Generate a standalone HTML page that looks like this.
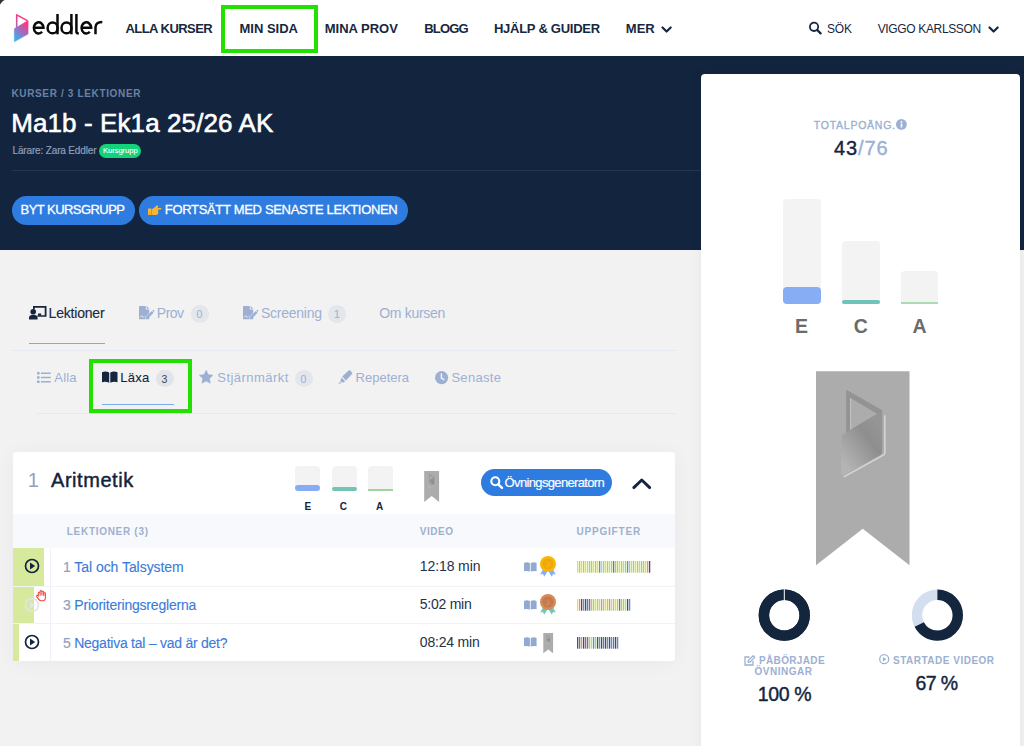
<!DOCTYPE html>
<html><head><meta charset="utf-8"><title>Eddler</title>
<style>
html,body{margin:0;padding:0;width:1024px;height:746px;overflow:hidden;background:#f2f2f2;}
.t{position:absolute;line-height:1;white-space:nowrap;font-family:"Liberation Sans",sans-serif;}
svg{overflow:visible}
</style></head><body>
<div style="position:absolute;left:0px;top:0px;width:1024px;height:56px;background:#fff"></div>
<div style="position:absolute;left:0px;top:56px;width:1024px;height:194px;background:#13253e"></div>
<div style="position:absolute;left:0px;top:250px;width:1024px;height:496px;background:#f2f2f2"></div>
<div style="position:absolute;left:12px;top:170px;width:700px;height:1px;background:#26374f"></div>
<div style="position:absolute;left:701px;top:74px;width:319px;height:700px;background:#fff;border-radius:4px;box-shadow:0 0 14px rgba(0,0,0,0.05)"></div>
<svg style="position:absolute;left:0px;top:0px;" width="6" height="6" viewBox="0 0 6 6"><path d="M0,0 H4.5 Q2,1 0,4.5 Z" fill="#333"/></svg>
<svg style="position:absolute;left:0px;top:0px;" width="32" height="50" viewBox="0 0 32 50"><defs><linearGradient id="lg" gradientUnits="userSpaceOnUse" x1="14" y1="40" x2="28" y2="25">
<stop offset="0" stop-color="#2cbcee"/><stop offset="0.55" stop-color="#9a6fc0"/><stop offset="1" stop-color="#ff3485"/></linearGradient></defs>
<path d="M16.7,27.8 V14.9 L27.4,20.6" fill="none" stroke="url(#lg)" stroke-width="1.6" stroke-linejoin="round"/>
<path d="M14.3,28.7 L28.1,20.5 V34.1 L14.3,41.8 Z" fill="url(#lg)" stroke="url(#lg)" stroke-width="0.5" stroke-linejoin="round"/></svg>
<svg style="position:absolute;left:0px;top:0px;" width="110" height="50" viewBox="0 0 110 50"><g fill="none" stroke="#0a0a0a" stroke-width="2.5" stroke-linecap="butt">
<path d="M33.9,27.8 H43.5 A4.85,5.55 0 1 0 42.1,31.8"/>
<ellipse cx="52.6" cy="27.9" rx="5.0" ry="5.45"/><path d="M57.5,14.0 V34.3"/>
<ellipse cx="66.5" cy="27.9" rx="5.0" ry="5.45"/><path d="M71.4,14.0 V34.3"/>
<path d="M76.4,14.0 V31.5 Q76.4,33.5 78.8,33.6"/>
<path d="M81.6,27.8 H91.2 A4.85,5.55 0 1 0 89.8,31.8"/>
<path d="M95.5,34.3 V27.3 Q95.5,22.0 102.3,22.0"/>
</g></svg>
<div class="t" style="left:125.5px;top:21.73px;font-size:13px;font-weight:700;color:#172740;letter-spacing:-0.55px;">ALLA KURSER</div>
<div class="t" style="left:239.5px;top:21.73px;font-size:13px;font-weight:700;color:#172740;letter-spacing:0.0px;">MIN SIDA</div>
<div class="t" style="left:324.7px;top:21.73px;font-size:13px;font-weight:700;color:#172740;letter-spacing:0px;">MINA PROV</div>
<div class="t" style="left:424.2px;top:21.73px;font-size:13px;font-weight:700;color:#172740;letter-spacing:-0.8px;">BLOGG</div>
<div class="t" style="left:494.0px;top:21.73px;font-size:13px;font-weight:700;color:#172740;letter-spacing:-0.27px;">HJÄLP &amp; GUIDER</div>
<div class="t" style="left:625.8px;top:21.73px;font-size:13px;font-weight:700;color:#172740;letter-spacing:0px;">MER</div>
<svg style="position:absolute;left:661px;top:25.5px;" width="11.2" height="7.5" viewBox="0 0 11.2 7.5"><path d="M1.5,1.5 L5.6,5.6 L9.7,1.5" fill="none" stroke="#172740" stroke-width="2.2" stroke-linecap="round" stroke-linejoin="round"/></svg>
<svg style="position:absolute;left:987.6px;top:25.5px;" width="11.2" height="7.5" viewBox="0 0 11.2 7.5"><path d="M1.5,1.5 L5.6,5.6 L9.7,1.5" fill="none" stroke="#172740" stroke-width="2.2" stroke-linecap="round" stroke-linejoin="round"/></svg>
<svg style="position:absolute;left:808px;top:21px;" width="14" height="14" viewBox="0 0 14 14"><circle cx="6.05" cy="5.85" r="4.15" fill="none" stroke="#172740" stroke-width="1.8"/><path d="M9.2,9.0 L12.6,12.4" stroke="#172740" stroke-width="2.3" stroke-linecap="round"/></svg>
<div class="t" style="left:827.0px;top:22.99px;font-size:12px;font-weight:400;color:#172740;letter-spacing:-0.2px;">SÖK</div>
<div class="t" style="left:877.7px;top:22.99px;font-size:12px;font-weight:400;color:#172740;letter-spacing:-0.35px;">VIGGO KARLSSON</div>
<div style="position:absolute;left:221px;top:5px;width:89px;height:40px;border:4px solid #22e000"></div>
<div class="t" style="left:11.4px;top:88.91px;font-size:10px;font-weight:700;color:#6a81a6;letter-spacing:0.65px;">KURSER / 3 LEKTIONER</div>
<div class="t" style="left:11.2px;top:109.57px;font-size:26px;font-weight:400;color:#ffffff;letter-spacing:0.1px;-webkit-text-stroke:0.57px #ffffff;">Ma1b - Ek1a 25/26 AK</div>
<div class="t" style="left:12.5px;top:145.81px;font-size:10px;font-weight:400;color:#8e9db8;letter-spacing:-0.15px;-webkit-text-stroke:0.22px #8e9db8;">Lärare: Zara Eddler</div>
<div style="position:absolute;left:98.8px;top:144.2px;width:42.6px;height:13.6px;background:#12d37a;border-radius:7px"></div>
<div class="t" style="left:103.0px;top:147.09px;font-size:7.6px;font-weight:400;color:#ffffff;letter-spacing:-0.05px;-webkit-text-stroke:0.1px #fff;">Kursgrupp</div>
<div style="position:absolute;left:12px;top:196px;width:122.6px;height:29px;background:#2f7ce0;border-radius:15px"></div>
<div style="position:absolute;left:138.7px;top:196px;width:269px;height:29px;background:#2f7ce0;border-radius:15px"></div>
<div class="t" style="left:20.6px;top:203.33px;font-size:13px;font-weight:400;color:#fff;letter-spacing:-0.55px;-webkit-text-stroke:0.29px #fff;">BYT KURSGRUPP</div>
<div class="t" style="left:164.8px;top:203.33px;font-size:13px;font-weight:400;color:#fff;letter-spacing:-0.32px;-webkit-text-stroke:0.29px #fff;">FORTSÄTT MED SENASTE LEKTIONEN</div>
<svg style="position:absolute;left:147.8px;top:204.8px;" width="14" height="10.3" viewBox="0 0 14 10.3"><g fill="#fbb430">
<rect x="0" y="3.6" width="3.6" height="6.4" rx="0.6"/>
<path d="M4,4.6 Q4.6,3.2 6.2,2.7 L8.6,0.4 Q9.8,-0.2 10.2,1 L9.6,3.1 H13 Q14.4,3.6 13,4.6 H10.2 L10.2,8.6 Q9.8,10 8.4,10 H5 Q4,10 4,9 Z"/>
</g><rect x="1.2" y="8.2" width="1" height="1" fill="#c77a10"/></svg>
<div class="t" style="left:813.8px;top:120.33px;font-size:10.5px;font-weight:400;color:#9cb0d2;letter-spacing:0.75px;-webkit-text-stroke:0.35px #9cb0d2;">TOTALPOÄNG.</div>
<svg style="position:absolute;left:896.3px;top:119.2px;" width="10.8" height="10.8" viewBox="0 0 10.8 10.8"><circle cx="5.4" cy="5.4" r="5.4" fill="#9cb0d2"/><rect x="4.7" y="4.5" width="1.6" height="4" fill="#fff"/><circle cx="5.5" cy="2.9" r="0.9" fill="#fff"/></svg>
<div class="t" style="left:834.0px;top:138.02px;font-size:20px;color:#15253e;letter-spacing:0.9px;-webkit-text-stroke:0.4px #15253e">43<span style="color:#9bb0d3;-webkit-text-stroke:0.4px #9bb0d3">/76</span></div>
<div style="position:absolute;left:783px;top:198.7px;width:37.5px;height:105.3px;background:#f3f3f3;border-radius:4px"></div>
<div style="position:absolute;left:783px;top:286.7px;width:37.5px;height:17.3px;background:#87adf5;border-radius:4px"></div>
<div style="position:absolute;left:842px;top:241px;width:37.5px;height:63px;background:#f3f3f3;border-radius:4px 4px 0 0"></div>
<div style="position:absolute;left:842px;top:300.3px;width:37.5px;height:3.7px;background:#6fc4b9;border-radius:2px"></div>
<div style="position:absolute;left:900.5px;top:271px;width:37.8px;height:33px;background:#f3f3f3;border-radius:4px 4px 0 0"></div>
<div style="position:absolute;left:900.5px;top:301.8px;width:37.8px;height:2px;background:#acdcb4"></div>
<div class="t" style="left:795.0px;top:316.70px;font-size:19.5px;font-weight:700;color:#6b6b6b;letter-spacing:-0.3px;">E</div>
<div class="t" style="left:853.8px;top:316.70px;font-size:19.5px;font-weight:700;color:#6b6b6b;letter-spacing:0px;">C</div>
<div class="t" style="left:912.6px;top:316.70px;font-size:19.5px;font-weight:700;color:#6b6b6b;letter-spacing:0px;">A</div>
<svg style="position:absolute;left:816px;top:371.3px;" width="93.5" height="194.7" viewBox="0 0 94 195"><path d="M0,0 H94 V195 L47,158.2 L0,195 Z" fill="#acacac"/><defs><linearGradient id="rg93" gradientUnits="userSpaceOnUse" x1="26" y1="90" x2="66" y2="60"><stop offset="0" stop-color="#b4b4b4"/><stop offset="0.7" stop-color="#8e8e8e"/><stop offset="1" stop-color="#959595"/></linearGradient></defs>
<path fill-rule="evenodd" d="M31.4,19 L66.5,39 L66.5,42 L30.4,64 V20 Q30.4,18.5 31.4,19 Z M34.8,26.8 L61.6,42.8 L34.8,58.9 Z" fill="#939393"/>
<path d="M34.8,26.8 V58.9" stroke="#d0d0d0" stroke-width="1" opacity="0.8"/>
<path d="M25.4,66 Q25.4,64.3 27,63.4 L66.5,39.5 V81 Q66.5,83 64.8,84 L27.5,104.4 Q25.4,105.4 25.4,103 Z" fill="url(#rg93)"/>
<path d="M28,106 L67.6,84.2 Q69.2,83.3 69.2,81.5 V44" fill="none" stroke="#dedede" stroke-width="1.5" opacity="0.85"/></svg>
<svg style="position:absolute;left:755px;top:585px;" width="60" height="60" viewBox="0 0 60 60"><circle cx="29.3" cy="30.2" r="20.4" fill="none" stroke="#14253e" stroke-width="10.400000000000002"/><circle cx="29.3" cy="30.2" r="20.4" fill="none" stroke="#14253e" stroke-width="10.400000000000002" stroke-dasharray="128.18 128.18" transform="rotate(-90 29.3 30.2)"/><rect x="28.8" y="4.099999999999998" width="1" height="11.400000000000002" fill="#fff"/></svg>
<svg style="position:absolute;left:908px;top:585px;" width="60" height="60" viewBox="0 0 60 60"><circle cx="29.4" cy="30.2" r="20.4" fill="none" stroke="#d3dff0" stroke-width="10.400000000000002"/><circle cx="29.4" cy="30.2" r="20.4" fill="none" stroke="#14253e" stroke-width="10.400000000000002" stroke-dasharray="85.88 128.18" transform="rotate(-90 29.4 30.2)"/></svg>
<svg style="position:absolute;left:743px;top:655px;" width="13" height="11" viewBox="0 0 13 11"><g fill="none" stroke="#9cb0d2" stroke-width="1.3"><path d="M6.5,2 H2 V10 H10 V6"/><path d="M5,7.2 L5.4,5.4 L10.2,0.8 L11.8,2.4 L7,7 Z" stroke-linejoin="round"/></g></svg>
<div class="t" style="left:759.0px;top:655.91px;font-size:10px;font-weight:700;color:#9cb0d2;letter-spacing:0.35px;">PÅBÖRJADE</div>
<div class="t" style="left:754.6px;top:666.71px;font-size:10px;font-weight:700;color:#9cb0d2;letter-spacing:0.5px;">ÖVNINGAR</div>
<div class="t" style="left:757.8px;top:685.10px;font-size:19.5px;font-weight:400;color:#15253e;letter-spacing:-0.4px;-webkit-text-stroke:0.43px #15253e;">100 %</div>
<svg style="position:absolute;left:878.8px;top:654.4px;" width="10.5" height="10.5" viewBox="0 0 10.5 10.5"><circle cx="5.2" cy="5.2" r="4.5" fill="none" stroke="#9cb0d2" stroke-width="1.3"/><path d="M3.9,3 L7.4,5.2 L3.9,7.4 Z" fill="#9cb0d2"/></svg>
<div class="t" style="left:893.0px;top:655.91px;font-size:10px;font-weight:700;color:#9cb0d2;letter-spacing:0.5px;">STARTADE VIDEOR</div>
<div class="t" style="left:915.5px;top:673.90px;font-size:19.5px;font-weight:400;color:#15253e;letter-spacing:-0.6px;-webkit-text-stroke:0.43px #15253e;">67 %</div>
<svg style="position:absolute;left:28.6px;top:305.7px;" width="17.5" height="13.4" viewBox="0 0 17.5 13.4"><g fill="#15253e"><circle cx="4.2" cy="5.8" r="2.8"/><path d="M0,12 Q0,8.9 3,8.9 H5.6 Q8.6,8.9 8.6,12 V13.4 H0 Z"/><path d="M4,0 H17.5 V10.8 H8.4 V9.2 H15.7 V1.7 H5.7 V3.4 H4 Z"/><rect x="9" y="7.5" width="3.2" height="2" /></g></svg>
<div class="t" style="left:48.6px;top:306.27px;font-size:14px;font-weight:400;color:#1a2a42;letter-spacing:-0.2px;-webkit-text-stroke:0.15px #1a2a42;">Lektioner</div>
<div style="position:absolute;left:28.6px;top:342.6px;width:76.4px;height:1.5px;background:#7aa9ee"></div>
<svg style="position:absolute;left:139px;top:305.7px;" width="15" height="13.2" viewBox="0 0 15 13.2"><g fill="#9db0d3"><path d="M0,0 H6.8 V3.6 H10.2 V7 L6.5,10.8 L6,12.6 L8.5,12 L10.2,10.3 V13.2 H0 Z"/><path d="M7.6,0 L10.2,2.7 H7.6 Z"/><path d="M7.2,10.6 L12.8,5 L14.6,6.8 L9,12.4 L6.8,12.9 Z"/><path d="M13.3,4.5 L13.9,3.9 Q14.3,3.6 14.6,3.9 L15.3,4.6 Q15.6,4.9 15.3,5.3 L14.7,5.9 Z"/></g><path d="M1.3,11.3 Q2.5,8.8 3.4,10.6 Q4.3,12 5.4,10.3" fill="none" stroke="#f2f2f2" stroke-width="0.9"/></svg>
<div class="t" style="left:156.8px;top:306.27px;font-size:14px;font-weight:400;color:#9db0d3;letter-spacing:-0.5px;">Prov</div>
<div style="position:absolute;left:191.3px;top:305.3px;width:17.6px;height:17.6px;background:#e3e6eb;border-radius:50%"></div>
<div class="t" style="left:196.6px;top:308.73px;font-size:10.5px;font-weight:400;color:#9db0d3;letter-spacing:0px;">0</div>
<svg style="position:absolute;left:242.5px;top:305.7px;" width="15" height="13.2" viewBox="0 0 15 13.2"><g fill="#9db0d3"><path d="M0,0 H6.8 V3.6 H10.2 V7 L6.5,10.8 L6,12.6 L8.5,12 L10.2,10.3 V13.2 H0 Z"/><path d="M7.6,0 L10.2,2.7 H7.6 Z"/><path d="M7.2,10.6 L12.8,5 L14.6,6.8 L9,12.4 L6.8,12.9 Z"/><path d="M13.3,4.5 L13.9,3.9 Q14.3,3.6 14.6,3.9 L15.3,4.6 Q15.6,4.9 15.3,5.3 L14.7,5.9 Z"/></g><path d="M1.3,11.3 Q2.5,8.8 3.4,10.6 Q4.3,12 5.4,10.3" fill="none" stroke="#f2f2f2" stroke-width="0.9"/></svg>
<div class="t" style="left:261.0px;top:306.27px;font-size:14px;font-weight:400;color:#9db0d3;letter-spacing:-0.25px;">Screening</div>
<div style="position:absolute;left:328px;top:305.3px;width:18.3px;height:17.6px;background:#e3e6eb;border-radius:50%"></div>
<div class="t" style="left:333.9px;top:308.73px;font-size:10.5px;font-weight:400;color:#9db0d3;letter-spacing:0px;">1</div>
<div class="t" style="left:379.2px;top:306.27px;font-size:14px;font-weight:400;color:#9db0d3;letter-spacing:-0.3px;">Om kursen</div>
<div style="position:absolute;left:12px;top:350px;width:664px;height:1px;background:#e6ebf3"></div>
<svg style="position:absolute;left:37px;top:371.6px;" width="13.8" height="11" viewBox="0 0 13.8 11"><g fill="#9db0d3"><rect x="0" y="0" width="2.6" height="2.4" rx="0.5"/><rect x="0" y="4.3" width="2.6" height="2.4" rx="0.5"/><rect x="0" y="8.6" width="2.6" height="2.4" rx="0.5"/><rect x="3.9" y="0.5" width="9.9" height="1.5"/><rect x="3.9" y="4.75" width="9.9" height="1.5"/><rect x="3.9" y="9" width="9.9" height="1.5"/></g></svg>
<div class="t" style="left:54.3px;top:371.33px;font-size:13px;font-weight:400;color:#9db0d3;letter-spacing:0.2px;">Alla</div>
<svg style="position:absolute;left:101.7px;top:371.2px;" width="15.5" height="11.8" viewBox="0 0 15.5 11.8"><g fill="#15253e"><path d="M0,1.2 Q3.5,-0.2 7.2,1.4 V11.8 Q3.8,10.2 0,11.2 Z"/><path d="M15.5,1.2 Q12,-0.2 8.3,1.4 V11.8 Q11.7,10.2 15.5,11.2 Z"/></g></svg>
<div class="t" style="left:120.2px;top:371.33px;font-size:13px;font-weight:400;color:#15253e;letter-spacing:0.25px;-webkit-text-stroke:0.1px #15253e;">Läxa</div>
<div style="position:absolute;left:156.2px;top:369.6px;width:17.4px;height:17.3px;background:#e1e4e9;border-radius:50%"></div>
<div class="t" style="left:161.6px;top:373.53px;font-size:10.5px;font-weight:400;color:#3a4558;letter-spacing:0px;">3</div>
<div style="position:absolute;left:101.7px;top:404.4px;width:72.2px;height:1px;background:#7aa9ee"></div>
<svg style="position:absolute;left:199.4px;top:370.4px;" width="14.3" height="13.6" viewBox="0 0 14.3 13.6"><path d="M7.15,0.3 L9.2,4.6 L13.9,5.2 L10.5,8.5 L11.3,13.2 L7.15,10.9 L3,13.2 L3.8,8.5 L0.4,5.2 L5.1,4.6 Z" fill="#9db0d3" stroke="#9db0d3" stroke-width="0.6" stroke-linejoin="round"/></svg>
<div class="t" style="left:217.3px;top:371.13px;font-size:13px;font-weight:400;color:#9db0d3;letter-spacing:0.45px;">Stjärnmärkt</div>
<div style="position:absolute;left:295px;top:370px;width:17.6px;height:17px;background:#e3e6eb;border-radius:50%"></div>
<div class="t" style="left:300.6px;top:373.53px;font-size:10.5px;font-weight:400;color:#9db0d3;letter-spacing:0px;">0</div>
<svg style="position:absolute;left:337.9px;top:370.4px;" width="14.6" height="13.6" viewBox="0 0 14.6 13.6"><g fill="#9db0d3"><path d="M4.2,6.6 L10.6,0.6 Q11.4,-0.1 12.2,0.6 L14,2.4 Q14.7,3.2 14,4 L8,10.4 Z"/><path d="M3.4,7.6 L7.2,11.3 L5.6,12.6 L2.2,11.7 Z"/><path d="M1.8,12.2 L3.6,12.8 L2.6,13.6 L0,13.6 Z"/></g></svg>
<div class="t" style="left:355.6px;top:371.13px;font-size:13px;font-weight:400;color:#9db0d3;letter-spacing:0px;">Repetera</div>
<svg style="position:absolute;left:435.1px;top:370.8px;" width="13.2" height="13.2" viewBox="0 0 13.2 13.2"><circle cx="6.6" cy="6.6" r="6.6" fill="#9db0d3"/><path d="M6.4,3 V7 L8.8,8.6" fill="none" stroke="#f2f2f2" stroke-width="1.5" stroke-linecap="round"/></svg>
<div class="t" style="left:451.4px;top:371.13px;font-size:13px;font-weight:400;color:#9db0d3;letter-spacing:0.3px;">Senaste</div>
<div style="position:absolute;left:37px;top:413px;width:639px;height:1px;background:#e3e9f3"></div>
<div style="position:absolute;left:89px;top:359px;width:95.2px;height:46.4px;border:4px solid #22e000"></div>
<div style="position:absolute;left:13px;top:451.6px;width:662.4px;height:209.2px;background:#fff;border-radius:3px;box-shadow:0 2px 22px rgba(0,0,0,0.045)"></div>
<div class="t" style="left:27.8px;top:470.12px;font-size:20px;font-weight:400;color:#8ea3c4;letter-spacing:0px;">1</div>
<div class="t" style="left:51.0px;top:469.72px;font-size:20px;font-weight:400;color:#13233c;letter-spacing:0.55px;-webkit-text-stroke:0.44px #13233c;">Aritmetik</div>
<div style="position:absolute;left:295.3px;top:465.8px;width:25px;height:25.2px;background:#f3f3f3;border-radius:4px"></div>
<div style="position:absolute;left:295.3px;top:484.9px;width:25px;height:6.2px;background:#86adf4;border-radius:3px"></div>
<div style="position:absolute;left:331.5px;top:465.8px;width:25px;height:25.2px;background:#f3f3f3;border-radius:4px"></div>
<div style="position:absolute;left:331.5px;top:487.4px;width:25px;height:3.6px;background:#74c3b7;border-radius:2px"></div>
<div style="position:absolute;left:367.7px;top:465.8px;width:25px;height:25.2px;background:#f3f3f3;border-radius:4px 4px 0 0"></div>
<div style="position:absolute;left:367.7px;top:489px;width:25px;height:1.8px;background:#9fd69e"></div>
<div class="t" style="left:304.5px;top:502.21px;font-size:10px;font-weight:700;color:#15253e;letter-spacing:0px;">E</div>
<div class="t" style="left:339.8px;top:502.21px;font-size:10px;font-weight:700;color:#15253e;letter-spacing:0px;">C</div>
<div class="t" style="left:375.9px;top:502.21px;font-size:10px;font-weight:700;color:#15253e;letter-spacing:0px;">A</div>
<svg style="position:absolute;left:423.6px;top:471.1px;" width="15.3" height="30.9" viewBox="0 0 94 195"><path d="M0,0 H94 V195 L47,158.2 L0,195 Z" fill="#acacac"/><defs><linearGradient id="rg15" gradientUnits="userSpaceOnUse" x1="26" y1="90" x2="66" y2="60"><stop offset="0" stop-color="#b4b4b4"/><stop offset="0.7" stop-color="#8e8e8e"/><stop offset="1" stop-color="#959595"/></linearGradient></defs>
<path fill-rule="evenodd" d="M31.4,19 L66.5,39 L66.5,42 L30.4,64 V20 Q30.4,18.5 31.4,19 Z M34.8,26.8 L61.6,42.8 L34.8,58.9 Z" fill="#939393"/>
<path d="M34.8,26.8 V58.9" stroke="#d0d0d0" stroke-width="1" opacity="0.8"/>
<path d="M25.4,66 Q25.4,64.3 27,63.4 L66.5,39.5 V81 Q66.5,83 64.8,84 L27.5,104.4 Q25.4,105.4 25.4,103 Z" fill="url(#rg15)"/>
<path d="M28,106 L67.6,84.2 Q69.2,83.3 69.2,81.5 V44" fill="none" stroke="#dedede" stroke-width="1.5" opacity="0.85"/></svg>
<div style="position:absolute;left:480.7px;top:469px;width:131.8px;height:27px;background:#2f7ce0;border-radius:14px"></div>
<svg style="position:absolute;left:489.8px;top:476.3px;" width="13.4" height="13.4" viewBox="0 0 13.4 13.4"><circle cx="5.3" cy="5.3" r="4" fill="none" stroke="#fff" stroke-width="2.1"/><path d="M8.3,8.3 L12.0,12.0" stroke="#fff" stroke-width="2.5" stroke-linecap="round"/></svg>
<div class="t" style="left:504.6px;top:475.53px;font-size:13px;font-weight:400;color:#fff;letter-spacing:-0.65px;-webkit-text-stroke:0.15px #fff;">Övningsgeneratorn</div>
<svg style="position:absolute;left:631.5px;top:478px;" width="19.5" height="11.5" viewBox="0 0 19.5 11.5"><path d="M1.8,9.6 L9.75,2 L17.7,9.6" fill="none" stroke="#15253e" stroke-width="2.9" stroke-linecap="round" stroke-linejoin="round"/></svg>
<div style="position:absolute;left:13px;top:514.4px;width:662.4px;height:33.2px;background:#f8f9fc"></div>
<div class="t" style="left:66.8px;top:527.01px;font-size:10px;font-weight:700;color:#9eb0ce;letter-spacing:0.7px;">LEKTIONER (3)</div>
<div class="t" style="left:419.8px;top:527.01px;font-size:10px;font-weight:700;color:#9eb0ce;letter-spacing:0.55px;">VIDEO</div>
<div class="t" style="left:576.5px;top:527.01px;font-size:10px;font-weight:700;color:#9eb0ce;letter-spacing:0.8px;">UPPGIFTER</div>
<div style="position:absolute;left:13px;top:547.6px;width:30.8px;height:38px;background:#d6e99c"></div>
<div style="position:absolute;left:13px;top:586.4px;width:21.1px;height:36.6px;background:#d6e99c"></div>
<div style="position:absolute;left:13px;top:623.8px;width:6.0px;height:37px;background:#d6e99c"></div>
<div style="position:absolute;left:13px;top:585.6px;width:662.4px;height:1px;background:#f0f3f8"></div>
<div style="position:absolute;left:13px;top:623.0px;width:662.4px;height:1px;background:#f0f3f8"></div>
<div style="position:absolute;left:50.2px;top:547.6px;width:1px;height:113px;background:#eef1f7"></div>
<svg style="position:absolute;left:23.7px;top:558.4px;" width="16" height="16" viewBox="0 0 16 16"><circle cx="8" cy="8" r="6.5" fill="none" stroke="#14243c" stroke-width="1.7"/><path d="M6,4.6 L11.2,8 L6,11.4 Z" fill="#14243c"/></svg>
<svg style="position:absolute;left:23.7px;top:596.6px;" width="16" height="16" viewBox="0 0 16 16"><circle cx="8" cy="8" r="6.5" fill="none" stroke="#e2e4e6" stroke-width="1.7"/><path d="M6,4.6 L11.2,8 L6,11.4 Z" fill="#e2e4e6"/></svg>
<svg style="position:absolute;left:23.7px;top:633.8px;" width="16" height="16" viewBox="0 0 16 16"><circle cx="8" cy="8" r="6.5" fill="none" stroke="#14243c" stroke-width="1.7"/><path d="M6,4.6 L11.2,8 L6,11.4 Z" fill="#14243c"/></svg>
<svg style="position:absolute;left:35.6px;top:589.8px;" width="10.5" height="11.5" viewBox="0 0 10.5 11.5"><path d="M2.3,6.2 V3.2 Q2.3,2.2 3.2,2.2 Q4.1,2.2 4.1,3.2 V5.2 V1.6 Q4.1,0.6 5,0.6 Q5.9,0.6 5.9,1.6 V5 V2.2 Q5.9,1.2 6.8,1.2 Q7.7,1.2 7.7,2.2 V5.4 V3.6 Q7.7,2.7 8.5,2.7 Q9.4,2.7 9.4,3.6 V7.4 Q9.4,10.8 6,10.8 H5.4 Q3.8,10.8 2.8,9.4 L0.8,6.8 Q0.2,5.9 1,5.4 Q1.7,5 2.3,6.2 Z" fill="#fff" stroke="#f0463e" stroke-width="1.1" stroke-linejoin="round"/></svg>
<div class="t" style="left:63.0px;top:559.57px;font-size:14px;color:#3b7cdb;letter-spacing:-0.05px;-webkit-text-stroke:0.12px #3b7cdb"><b style="color:#8fa1bf;font-weight:400;-webkit-text-stroke:0.2px #8fa1bf">1</b> Tal och Talsystem</div>
<div class="t" style="left:63.0px;top:597.67px;font-size:14px;color:#3b7cdb;letter-spacing:-0.2px;-webkit-text-stroke:0.12px #3b7cdb"><b style="color:#8fa1bf;font-weight:400;-webkit-text-stroke:0.2px #8fa1bf">3</b> Prioriteringsreglerna</div>
<div class="t" style="left:63.0px;top:635.67px;font-size:14px;color:#3b7cdb;letter-spacing:-0.25px;-webkit-text-stroke:0.12px #3b7cdb"><b style="color:#8fa1bf;font-weight:400;-webkit-text-stroke:0.2px #8fa1bf">5</b> Negativa tal – vad är det?</div>
<div class="t" style="left:419.8px;top:559.27px;font-size:14px;font-weight:400;color:#233149;letter-spacing:-0.1px;">12:18 min</div>
<div class="t" style="left:419.8px;top:597.07px;font-size:14px;font-weight:400;color:#233149;letter-spacing:-0.25px;">5:02 min</div>
<div class="t" style="left:419.8px;top:635.07px;font-size:14px;font-weight:400;color:#233149;letter-spacing:-0.2px;">08:24 min</div>
<svg style="position:absolute;left:523.7px;top:562px;" width="12.6" height="9.6" viewBox="0 0 12.6 9.6"><g fill="#92aad2"><path d="M0,0.9 Q2.9,-0.2 5.9,1 V9.6 Q3,8.5 0,9.2 Z"/><path d="M12.6,0.9 Q9.7,-0.2 6.7,1 V9.6 Q9.6,8.5 12.6,9.2 Z"/></g></svg>
<svg style="position:absolute;left:523.7px;top:599.8px;" width="12.6" height="9.6" viewBox="0 0 12.6 9.6"><g fill="#92aad2"><path d="M0,0.9 Q2.9,-0.2 5.9,1 V9.6 Q3,8.5 0,9.2 Z"/><path d="M12.6,0.9 Q9.7,-0.2 6.7,1 V9.6 Q9.6,8.5 12.6,9.2 Z"/></g></svg>
<svg style="position:absolute;left:523.7px;top:637.4px;" width="12.6" height="9.6" viewBox="0 0 12.6 9.6"><g fill="#92aad2"><path d="M0,0.9 Q2.9,-0.2 5.9,1 V9.6 Q3,8.5 0,9.2 Z"/><path d="M12.6,0.9 Q9.7,-0.2 6.7,1 V9.6 Q9.6,8.5 12.6,9.2 Z"/></g></svg>
<svg style="position:absolute;left:538.5px;top:555.1px;" width="18" height="23" viewBox="0 0 18 23"><path d="M4.8,13 L1.2,19.5 L4,19 L5.2,21.8 L9,15.5 L12.8,21.8 L14,19 L16.8,19.5 L13.2,13 Z" fill="#7fb0fb"/><circle cx="9" cy="9" r="8" fill="#f6b80b"/><circle cx="9" cy="9" r="5.6" fill="#f0a70a"/><path d="M8,5.6 V9.6 L10.6,8 Z" fill="#f6b80b" opacity="0.7"/><path d="M7.2,10.6 L11,8.6 V11.2 L7.2,13.2 Z" fill="#f6b80b" opacity="0.8"/></svg>
<svg style="position:absolute;left:538.5px;top:592.9px;" width="18" height="23" viewBox="0 0 18 23"><path d="M4.8,13 L1.2,19.5 L4,19 L5.2,21.8 L9,15.5 L12.8,21.8 L14,19 L16.8,19.5 L13.2,13 Z" fill="#6ccabb"/><circle cx="9" cy="9" r="8" fill="#d48b5c"/><circle cx="9" cy="9" r="5.6" fill="#c47a4c"/><path d="M8,5.6 V9.6 L10.6,8 Z" fill="#d48b5c" opacity="0.7"/><path d="M7.2,10.6 L11,8.6 V11.2 L7.2,13.2 Z" fill="#d48b5c" opacity="0.8"/></svg>
<svg style="position:absolute;left:542.8px;top:633.1px;" width="10.4" height="20.3" viewBox="0 0 94 195"><path d="M0,0 H94 V195 L47,158.2 L0,195 Z" fill="#acacac"/><defs><linearGradient id="rg10" gradientUnits="userSpaceOnUse" x1="26" y1="90" x2="66" y2="60"><stop offset="0" stop-color="#b4b4b4"/><stop offset="0.7" stop-color="#8e8e8e"/><stop offset="1" stop-color="#959595"/></linearGradient></defs>
<path fill-rule="evenodd" d="M31.4,19 L66.5,39 L66.5,42 L30.4,64 V20 Q30.4,18.5 31.4,19 Z M34.8,26.8 L61.6,42.8 L34.8,58.9 Z" fill="#939393"/>
<path d="M34.8,26.8 V58.9" stroke="#d0d0d0" stroke-width="1" opacity="0.8"/>
<path d="M25.4,66 Q25.4,64.3 27,63.4 L66.5,39.5 V81 Q66.5,83 64.8,84 L27.5,104.4 Q25.4,105.4 25.4,103 Z" fill="url(#rg10)"/>
<path d="M28,106 L67.6,84.2 Q69.2,83.3 69.2,81.5 V44" fill="none" stroke="#dedede" stroke-width="1.5" opacity="0.85"/></svg>
<svg style="position:absolute;left:577.4px;top:561.1px;" width="73.6" height="11.7" viewBox="0 0 73.6 11.7"><rect x="0.0" y="0" width="1.3" height="11.7" fill="#dfe04c"/><rect x="2.0" y="0" width="1.3" height="11.7" fill="#b3d43a"/><rect x="4.0" y="0" width="1.3" height="11.7" fill="#dfe04c"/><rect x="6.0" y="0" width="1.3" height="11.7" fill="#b3d43a"/><rect x="8.0" y="0" width="1.3" height="11.7" fill="#dfe04c"/><rect x="10.0" y="0" width="1.3" height="11.7" fill="#a7dcab"/><rect x="12.0" y="0" width="1.3" height="11.7" fill="#b3d43a"/><rect x="14.0" y="0" width="1.3" height="11.7" fill="#b3d43a"/><rect x="16.0" y="0" width="1.3" height="11.7" fill="#dfe04c"/><rect x="18.0" y="0" width="1.3" height="11.7" fill="#b3d43a"/><rect x="20.0" y="0" width="1.3" height="11.7" fill="#dfe04c"/><rect x="22.0" y="0" width="1.3" height="11.7" fill="#5b8fd0"/><rect x="24.0" y="0" width="1.3" height="11.7" fill="#a7dcab"/><rect x="26.0" y="0" width="1.3" height="11.7" fill="#b3d43a"/><rect x="28.0" y="0" width="1.3" height="11.7" fill="#dfe04c"/><rect x="30.0" y="0" width="1.3" height="11.7" fill="#b3d43a"/><rect x="32.0" y="0" width="1.3" height="11.7" fill="#a7dcab"/><rect x="34.0" y="0" width="1.3" height="11.7" fill="#b3d43a"/><rect x="36.0" y="0" width="1.3" height="11.7" fill="#7f6f78"/><rect x="38.0" y="0" width="1.3" height="11.7" fill="#b3d43a"/><rect x="40.0" y="0" width="1.3" height="11.7" fill="#b3d43a"/><rect x="42.0" y="0" width="1.3" height="11.7" fill="#dfe04c"/><rect x="44.0" y="0" width="1.3" height="11.7" fill="#b3d43a"/><rect x="46.0" y="0" width="1.3" height="11.7" fill="#a7dcab"/><rect x="48.0" y="0" width="1.3" height="11.7" fill="#b3d43a"/><rect x="50.0" y="0" width="1.3" height="11.7" fill="#5b8fd0"/><rect x="52.0" y="0" width="1.3" height="11.7" fill="#b3d43a"/><rect x="54.0" y="0" width="1.3" height="11.7" fill="#a7dcab"/><rect x="56.0" y="0" width="1.3" height="11.7" fill="#b3d43a"/><rect x="58.0" y="0" width="1.3" height="11.7" fill="#dfe04c"/><rect x="60.0" y="0" width="1.3" height="11.7" fill="#b3d43a"/><rect x="62.0" y="0" width="1.3" height="11.7" fill="#a7dcab"/><rect x="64.0" y="0" width="1.3" height="11.7" fill="#b3d43a"/><rect x="66.0" y="0" width="1.3" height="11.7" fill="#b3d43a"/><rect x="68.0" y="0" width="1.3" height="11.7" fill="#dfe04c"/><rect x="70.0" y="0" width="1.3" height="11.7" fill="#ff7f8c"/><rect x="72.0" y="0" width="1.3" height="11.7" fill="#3f4f74"/></svg>
<svg style="position:absolute;left:577.4px;top:599.3px;" width="53.2" height="11.7" viewBox="0 0 53.2 11.7"><rect x="0.0" y="0" width="1.3" height="11.7" fill="#dfe04c"/><rect x="2.0" y="0" width="1.3" height="11.7" fill="#ff7f8c"/><rect x="4.0" y="0" width="1.3" height="11.7" fill="#3f4f74"/><rect x="6.0" y="0" width="1.3" height="11.7" fill="#5b8fd0"/><rect x="8.0" y="0" width="1.3" height="11.7" fill="#3f4f74"/><rect x="10.0" y="0" width="1.3" height="11.7" fill="#7f6f78"/><rect x="12.0" y="0" width="1.3" height="11.7" fill="#7f6f78"/><rect x="14.0" y="0" width="1.3" height="11.7" fill="#b3d43a"/><rect x="16.0" y="0" width="1.3" height="11.7" fill="#b3d43a"/><rect x="18.0" y="0" width="1.3" height="11.7" fill="#dfe04c"/><rect x="20.0" y="0" width="1.3" height="11.7" fill="#b3d43a"/><rect x="22.0" y="0" width="1.3" height="11.7" fill="#a7dcab"/><rect x="24.0" y="0" width="1.3" height="11.7" fill="#ff7f8c"/><rect x="26.0" y="0" width="1.3" height="11.7" fill="#b3d43a"/><rect x="28.0" y="0" width="1.3" height="11.7" fill="#dfe04c"/><rect x="30.0" y="0" width="1.3" height="11.7" fill="#b3d43a"/><rect x="32.0" y="0" width="1.3" height="11.7" fill="#ff7f8c"/><rect x="34.0" y="0" width="1.3" height="11.7" fill="#a7dcab"/><rect x="36.0" y="0" width="1.3" height="11.7" fill="#b3d43a"/><rect x="38.0" y="0" width="1.3" height="11.7" fill="#dfe04c"/><rect x="40.0" y="0" width="1.3" height="11.7" fill="#b3d43a"/><rect x="42.0" y="0" width="1.3" height="11.7" fill="#7f6f78"/><rect x="44.0" y="0" width="1.3" height="11.7" fill="#b3d43a"/><rect x="46.0" y="0" width="1.3" height="11.7" fill="#b3d43a"/><rect x="48.0" y="0" width="1.3" height="11.7" fill="#a7dcab"/><rect x="50.0" y="0" width="1.3" height="11.7" fill="#3f4f74"/><rect x="52.0" y="0" width="1.3" height="11.7" fill="#5b8fd0"/></svg>
<svg style="position:absolute;left:577.4px;top:636.8px;" width="41.2" height="11.7" viewBox="0 0 41.2 11.7"><rect x="0.0" y="0" width="1.3" height="11.7" fill="#3f4f74"/><rect x="2.0" y="0" width="1.3" height="11.7" fill="#7f6f78"/><rect x="4.0" y="0" width="1.3" height="11.7" fill="#ff7f8c"/><rect x="6.0" y="0" width="1.3" height="11.7" fill="#3f4f74"/><rect x="8.0" y="0" width="1.3" height="11.7" fill="#7f6f78"/><rect x="10.0" y="0" width="1.3" height="11.7" fill="#7f6f78"/><rect x="12.0" y="0" width="1.3" height="11.7" fill="#b3d43a"/><rect x="14.0" y="0" width="1.3" height="11.7" fill="#a7dcab"/><rect x="16.0" y="0" width="1.3" height="11.7" fill="#5b8fd0"/><rect x="18.0" y="0" width="1.3" height="11.7" fill="#b3d43a"/><rect x="20.0" y="0" width="1.3" height="11.7" fill="#3f4f74"/><rect x="22.0" y="0" width="1.3" height="11.7" fill="#5b8fd0"/><rect x="24.0" y="0" width="1.3" height="11.7" fill="#3f4f74"/><rect x="26.0" y="0" width="1.3" height="11.7" fill="#7f6f78"/><rect x="28.0" y="0" width="1.3" height="11.7" fill="#3f4f74"/><rect x="30.0" y="0" width="1.3" height="11.7" fill="#5b8fd0"/><rect x="32.0" y="0" width="1.3" height="11.7" fill="#3f4f74"/><rect x="34.0" y="0" width="1.3" height="11.7" fill="#5b8fd0"/><rect x="36.0" y="0" width="1.3" height="11.7" fill="#7f6f78"/><rect x="38.0" y="0" width="1.3" height="11.7" fill="#3f4f74"/><rect x="40.0" y="0" width="1.3" height="11.7" fill="#5b8fd0"/></svg>
</body></html>
